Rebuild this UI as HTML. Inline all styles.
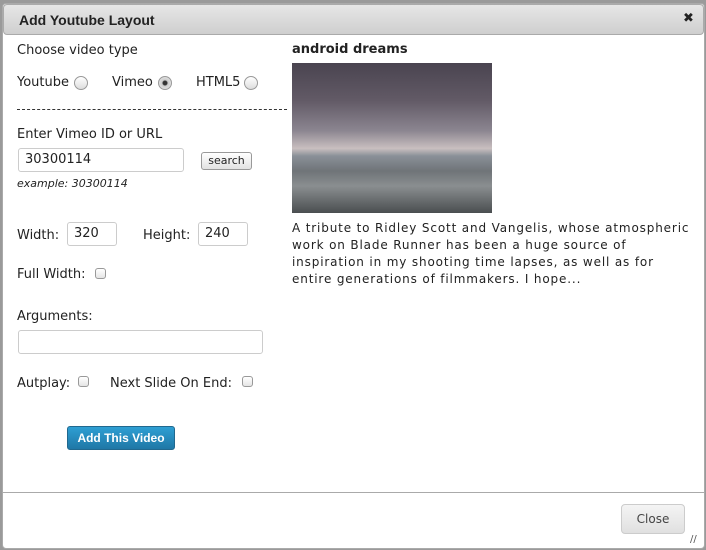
<!DOCTYPE html>
<html><head><style>
*{margin:0;padding:0;box-sizing:border-box}
body{width:706px;height:550px;background:#9a9a9a;position:relative;overflow:hidden;font-family:"DejaVu Sans","Liberation Sans",sans-serif;font-size:13px;color:#222}
.dlg{position:absolute;left:2px;top:3px;width:703px;height:546px;background:#fff;border:1px solid #aaa;border-radius:4px}
.tb{position:absolute;left:3px;top:4px;width:701px;height:31px;background:linear-gradient(#e6e6e6,#cfcfcf);border:1px solid #aaa;border-radius:4px;font-family:"Liberation Sans",sans-serif;font-weight:bold;font-size:14px;color:#222;padding:7px 0 0 15px}
.a{position:absolute;white-space:nowrap}
.radio{display:inline-block;width:14px;height:14px;border:1px solid #999;border-radius:50%;background:linear-gradient(#fff,#ddd)}
.cb{position:absolute;width:11px;height:11px;border:1px solid #999;border-radius:3px;background:linear-gradient(#fff,#e4e4e4)}
.inp{position:absolute;border:1px solid #ccc;border-radius:3px;background:#fff;padding:3px 0 0 6px;font-size:13px}
</style></head><body>
<div class="dlg"></div>
<div class="tb">Add Youtube Layout</div>
<div class="a" style="left:683px;top:11px;font-size:13px;font-weight:bold;color:#222">✖</div>
<div class="a" style="left:17px;top:43px">Choose video type</div>
<div class="a" style="left:17px;top:75px">Youtube</div><div class="radio a" style="left:74px;top:76px"></div>
<div class="a" style="left:112px;top:75px">Vimeo</div><div class="radio a" style="left:158px;top:76px;background:radial-gradient(circle,#333 0 2px,#ccc 3px,#eee)"></div>
<div class="a" style="left:196px;top:75px">HTML5</div><div class="radio a" style="left:244px;top:76px"></div>
<div class="a" style="left:17px;top:109px;width:270px;border-top:1px dashed #333"></div>
<div class="a" style="left:17px;top:127px">Enter Vimeo ID or URL</div>
<div class="inp" style="left:18px;top:148px;width:166px;height:24px">30300114</div>
<div class="a" style="left:201px;top:152px;width:51px;height:18px;border:1px solid #999;border-radius:3px;background:linear-gradient(#fff,#e2e2e2);font-size:11px;text-align:center;line-height:16px">search</div>
<div class="a" style="left:17px;top:177px;font-size:11px;font-style:italic">example: 30300114</div>
<div class="a" style="left:17px;top:228px">Width:</div>
<div class="inp" style="left:67px;top:222px;width:50px;height:24px">320</div>
<div class="a" style="left:143px;top:228px">Height:</div>
<div class="inp" style="left:198px;top:222px;width:50px;height:24px">240</div>
<div class="a" style="left:17px;top:267px">Full Width:</div><div class="cb" style="left:95px;top:268px"></div>
<div class="a" style="left:17px;top:309px">Arguments:</div>
<div class="inp" style="left:18px;top:330px;width:245px;height:24px"></div>
<div class="a" style="left:17px;top:376px">Autplay:</div><div class="cb" style="left:78px;top:376px"></div>
<div class="a" style="left:110px;top:376px">Next Slide On End:</div><div class="cb" style="left:242px;top:376px"></div>
<div class="a" style="left:67px;top:426px;width:108px;height:24px;border:1px solid #21688e;border-radius:3px;background:linear-gradient(#2e9fd3,#1f77a6);color:#fff;font-family:'Liberation Sans',sans-serif;font-weight:bold;font-size:12px;text-align:center;line-height:22px">Add This Video</div>
<div class="a" style="left:292px;top:42px;font-weight:bold;font-size:13px">android dreams</div>
<div class="a" style="left:292px;top:63px;width:200px;height:150px;background:linear-gradient(#4a4450 0%,#625a66 25%,#8b8590 45%,#c9bfc0 57%,#8a9098 62%,#6f7478 72%,#8a8e90 82%,#4a4e50 100%)"></div>
<div class="a" style="left:292px;top:220px;line-height:17px;font-size:12px;letter-spacing:0.85px">A tribute to Ridley Scott and Vangelis, whose atmospheric<br>work on Blade Runner has been a huge source of<br>inspiration in my shooting time lapses, as well as for<br>entire generations of filmmakers. I hope...</div>
<div class="a" style="left:3px;top:492px;width:701px;border-top:1px solid #aaa"></div>
<div class="a" style="left:621px;top:504px;width:64px;height:30px;border:1px solid #ccc;border-radius:4px;background:linear-gradient(#f4f4f4,#e0e0e0);text-align:center;line-height:28px;font-size:12px;color:#444">Close</div>
<div class="a" style="left:690px;top:534px;font-size:10px;color:#555">//</div>
</body></html>
